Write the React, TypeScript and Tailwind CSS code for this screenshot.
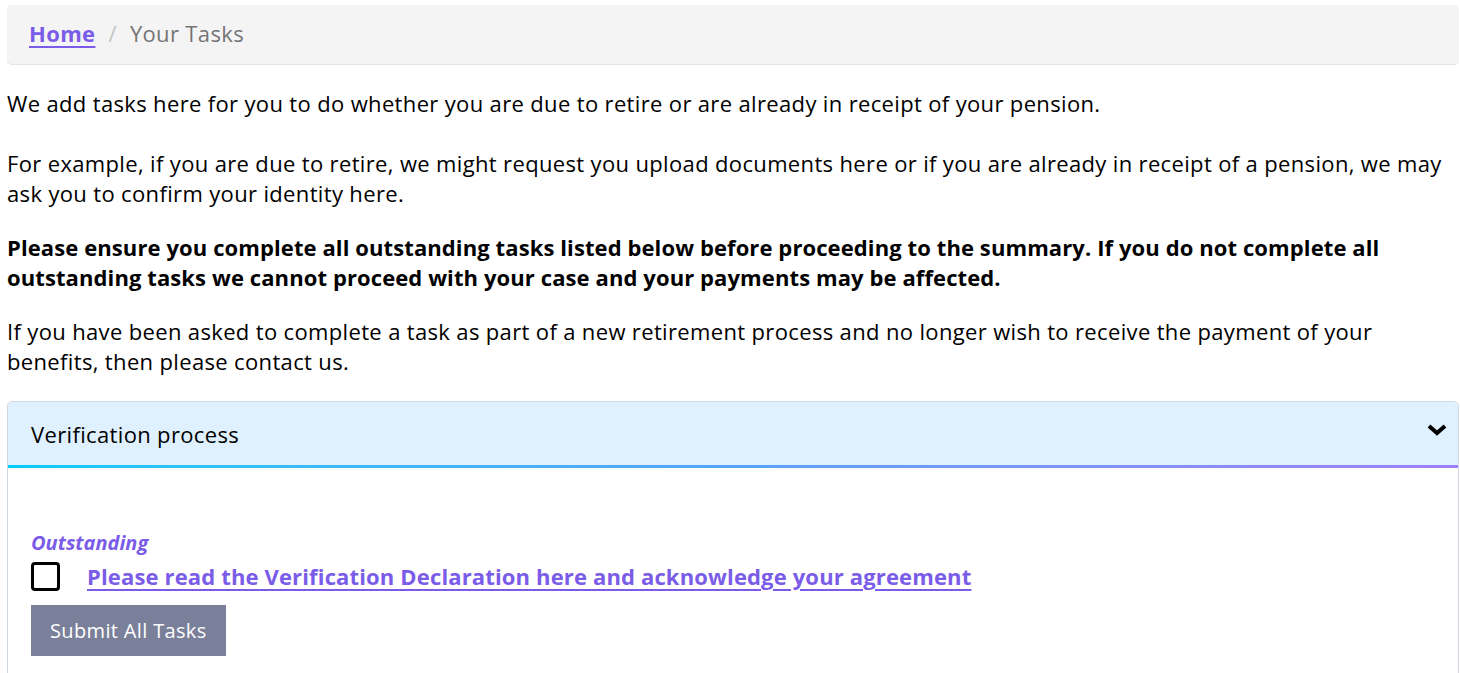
export default function App() {
  return (
    <div className="min-h-screen bg-white pl-[7px] pr-px pt-[5px] text-[22px] leading-[30px] tracking-[0.35px] text-black font-['Open_Sans','Liberation_Sans',sans-serif]">
      <nav className="flex items-center h-[60px] px-[22px] pb-[3px] bg-[#f4f4f4] rounded-[5px] border-b border-[#e2e2e2]">
        <a href="#" className="font-bold text-[#7b5ce8] underline underline-offset-4 decoration-2">
          Home
        </a>
        <span className="px-[13px] text-[#c4c4c4]">/</span>
        <span className="text-[#747474]">Your Tasks</span>
      </nav>

      <p className="mt-[23px]">
        We add tasks here for you to do whether you are due to retire or are already in receipt of your pension.
      </p>
      <p className="mt-[30px]">
        For example, if you are due to retire, we might request you upload documents here or if you are already in
        receipt of a pension, we may ask you to confirm your identity here.
      </p>
      <p className="mt-[24px] font-bold tracking-[0.1px]">
        Please ensure you complete all outstanding tasks listed below before proceeding to the summary. If you do not
        complete all outstanding tasks we cannot proceed with your case and your payments may be affected.
      </p>
      <p className="mt-[24px]">
        If you have been asked to complete a task as part of a new retirement process and no longer wish to receive
        the payment of your benefits, then please contact us.
      </p>

      <section className="mt-[25px] border border-[#cfd8e3] rounded-t-[5px]">
        <div className="flex items-center justify-between h-[63px] pl-[23px] pr-[10px] bg-[#dff0fe] rounded-t-[5px]">
          <span>Verification process</span>
          <svg width="22" height="14" viewBox="0 0 22 14" className="-mt-[8px]">
            <path d="M3 3 L11 10 L19 3" fill="none" stroke="#000" strokeWidth="4" />
          </svg>
        </div>
        <div className="h-[3px] bg-gradient-to-r from-[#00cdf5] via-[#55a3f5] to-[#9d7ff5]" />
        <div className="px-[23px] pt-[62px] pb-[20px]">
          <div className="italic font-bold text-[20px] tracking-normal text-[#7b5ce8] leading-[26px]">Outstanding</div>
          <div className="flex items-center mt-[5px]">
            <span className="w-[29px] h-[29px] border-[3px] border-black rounded-[4px] shrink-0" />
            <a
              href="#"
              className="ml-[27px] font-bold tracking-[0.15px] text-[#7b5ce8] underline underline-offset-4 decoration-2"
            >
              Please read the Verification Declaration here and acknowledge your agreement
            </a>
          </div>
          <button className="mt-[14px] h-[51px] px-[19px] bg-[#7a8099] text-white text-[20px]">Submit All Tasks</button>
        </div>
      </section>
    </div>
  );
}
